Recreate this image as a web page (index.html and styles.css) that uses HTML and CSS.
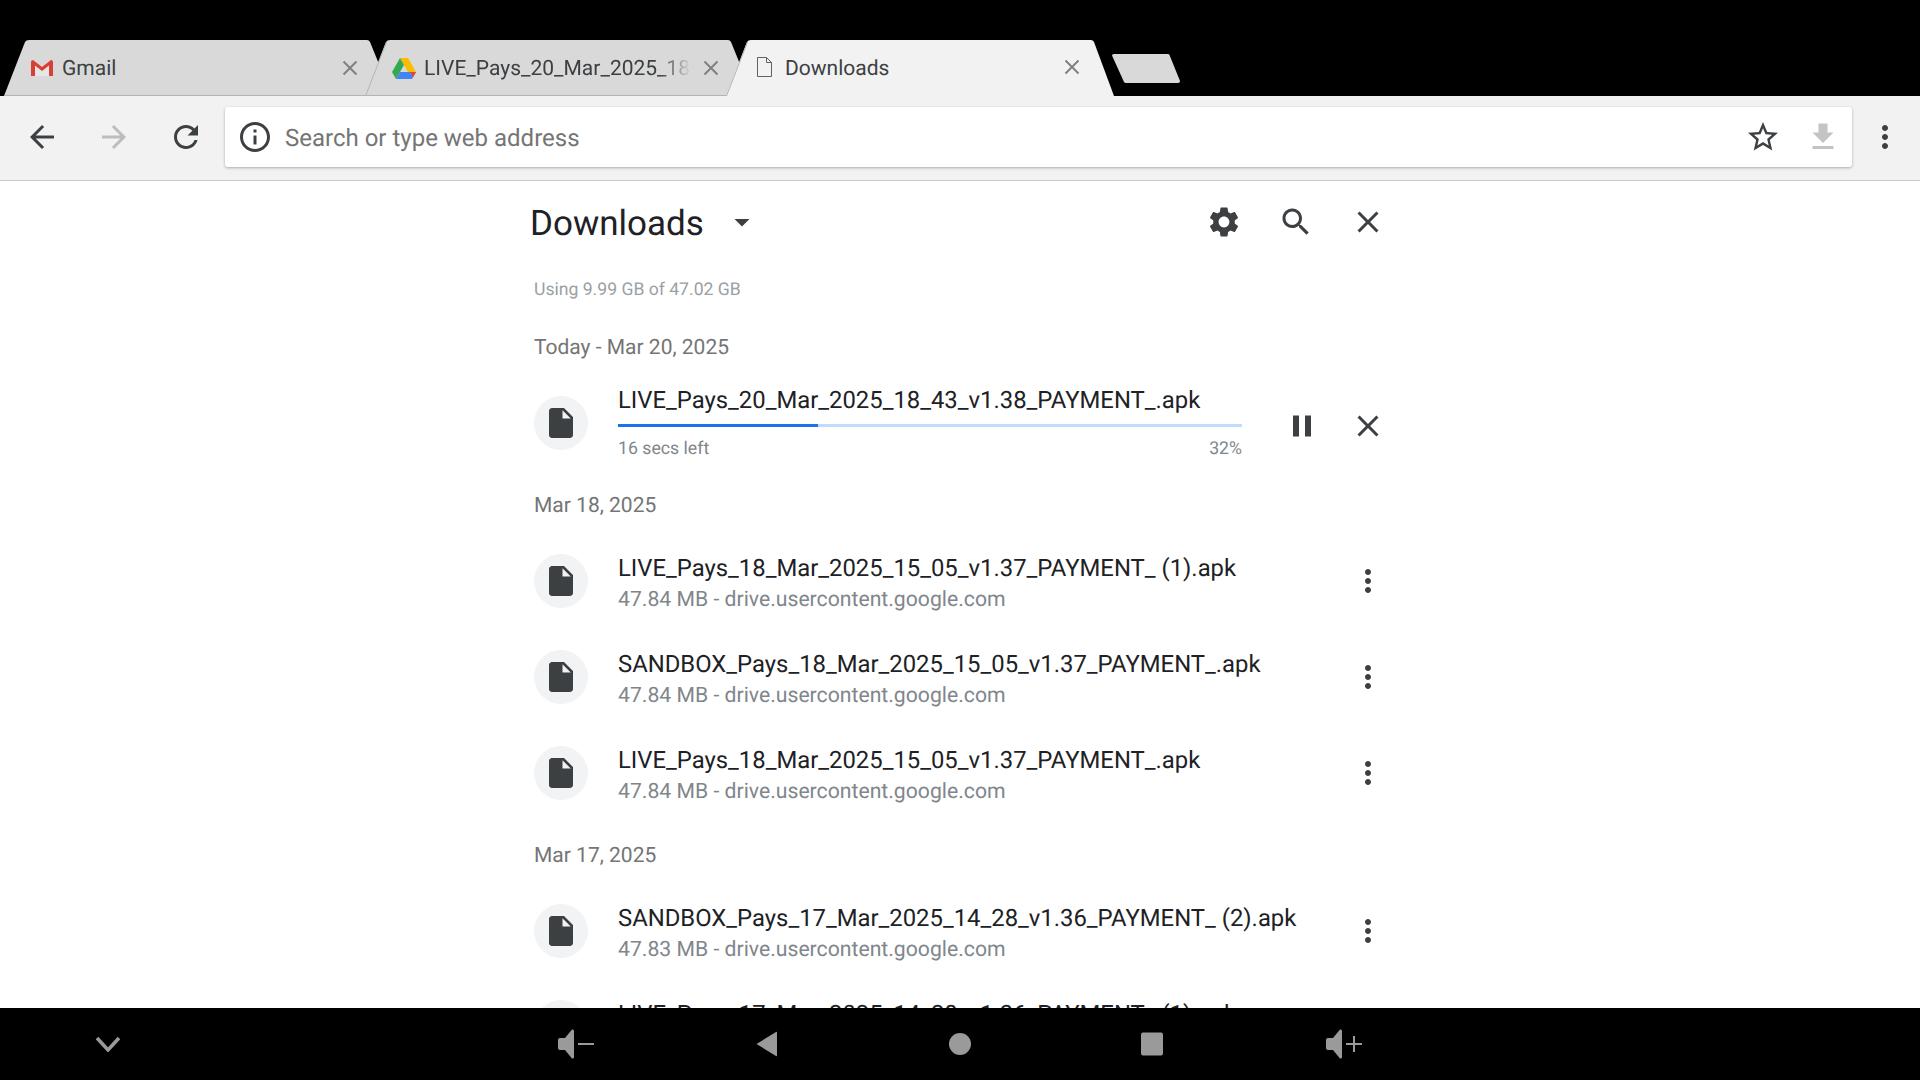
FILE: index.html
```html
<!DOCTYPE html>
<html lang="en">
<head>
  <meta charset="UTF-8" />
  <title>Downloads</title>
  <link rel="stylesheet" href="styles.css">
</head>
<body>

  <!-- Tab strip -->
  <div class="tabstrip">
    <div class="tab">
      <svg class="tab-shape" viewBox="0 0 388 56" preserveAspectRatio="none"><path class="shape-fill" d="M0 56L21 2Q22 0 25 0H363Q365 0 366 2L388 56Z"/><path class="shape-line" d="M0 55.500H388"/></svg>
      <svg class="favicon gmail" viewBox="0 0 22 16"><path fill="#e6e6e6" d="M2 1L11 8L20 1V16H2Z"/><path fill="#d93f32" d="M0 2Q0 0 2 0L11 7L20 0Q22 0 22 2V16H18V5.500L11 11L4 5.500V16H0Z"/></svg>
      <span class="tab-title">Gmail</span>
      <svg class="tab-close" viewBox="0 0 16 16"><path d="M1.500 1.500L14.500 14.500M14.500 1.500L1.500 14.500"/></svg>
    </div>
    <div class="tab">
      <svg class="tab-shape" viewBox="0 0 388 56" preserveAspectRatio="none"><path class="shape-fill" d="M0 56L21 2Q22 0 25 0H363Q365 0 366 2L388 56Z"/><path class="shape-line" d="M0 55.500H388M0.500 56L21.500 2"/></svg>
      <svg class="favicon drive" viewBox="0 0 24 21"><path fill="#fbbc04" d="M8 0H16L24 14H16Z"/><path fill="#34a853" d="M8 0L12 7L4 21L0 14Z"/><path fill="#4285f4" d="M8 14H24L20 21H4Z"/><path fill="#ea4335" d="M18.500 14H24L20.800 19.600Z"/></svg>
      <span class="tab-title tab-title-fade">LIVE_Pays_20_Mar_2025_18_43_v1.38_PAYMENT_.apk</span>
      <svg class="tab-close" viewBox="0 0 16 16"><path d="M1.500 1.500L14.500 14.500M14.500 1.500L1.500 14.500"/></svg>
    </div>
    <div class="tab tab-active">
      <svg class="tab-shape" viewBox="0 0 388 56" preserveAspectRatio="none"><path class="shape-fill" d="M0 56L21 2Q22 0 25 0H365Q367 0 368 2L388 56Z"/><path class="shape-line" d="M0.500 56L21.500 2"/></svg>
      <svg class="favicon page-icon" viewBox="0 0 15 20"><path d="M.5.500H9.500L14.500 5.500V19.500H.5ZM9.500.500V5.500H14.500"/></svg>
      <span class="tab-title">Downloads</span>
      <svg class="tab-close" viewBox="0 0 16 16"><path d="M1.500 1.500L14.500 14.500M14.500 1.500L1.500 14.500"/></svg>
    </div>
    <svg class="new-tab" viewBox="0 0 68 29"><path d="M0 1.500Q0 0 2 0H56Q57 0 57.500 1L68 27Q68 29 66 29H14Q12.500 29 12 28Z"/></svg>
  </div>

  <!-- Toolbar -->
  <div class="toolbar">
    <button class="tool-btn"><svg class="icon" viewBox="0 0 24 24"><path d="M20 11H7.830l5.590-5.590L12 4l-8 8 8 8 1.410-1.410L7.830 13H20v-2z"/></svg></button>
    <button class="tool-btn tool-off"><svg class="icon" viewBox="0 0 24 24"><path d="M12 4l-1.410 1.410L16.170 11H4v2h12.170l-5.580 5.590L12 20l8-8z"/></svg></button>
    <button class="tool-btn"><svg class="icon" viewBox="0 0 24 24"><path d="M17.650 6.350C16.200 4.900 14.210 4 12 4c-4.420 0-7.990 3.580-7.990 8s3.570 8 7.990 8c3.730 0 6.840-2.550 7.730-6h-2.080c-.82 2.330-3.040 4-5.650 4-3.310 0-6-2.690-6-6s2.690-6 6-6c1.660 0 3.140.69 4.220 1.780L13 11h7V4l-2.350 2.350z"/></svg></button>
    <div class="omnibox">
      <svg class="icon info" viewBox="0 0 24 24"><path d="M11 7h2v2h-2zm0 4h2v6h-2zm1-9C6.480 2 2 6.480 2 12s4.480 10 10 10 10-4.480 10-10S17.520 2 12 2zm0 18c-4.410 0-8-3.590-8-8s3.590-8 8-8 8 3.590 8 8-3.590 8-8 8z"/></svg>
      <span class="omni-text">Search or type web address</span>
      <svg class="icon star" viewBox="0 0 24 24"><path d="M22 9.240l-7.190-.62L12 2 9.190 8.630 2 9.240l5.460 4.730L5.820 21 12 17.270 18.180 21l-1.630-7.030L22 9.240zM12 15.400l-3.760 2.270 1-4.280-3.320-2.880 4.380-.38L12 6.100l1.710 4.040 4.380.38-3.320 2.880 1 4.280L12 15.400z"/></svg>
      <svg class="icon dl-arrow" viewBox="0 0 24 24"><path d="M19 9h-4V3H9v6H5l7 7 7-7zM5 18v2h14v-2H5z"/></svg>
    </div>
    <button class="tool-btn tool-menu"><svg class="icon" viewBox="0 0 24 24"><path d="M12 8c1.100 0 2-.9 2-2s-.9-2-2-2-2 .9-2 2 .9 2 2 2zm0 2c-1.100 0-2 .9-2 2s.9 2 2 2 2-.9 2-2-.9-2-2-2zm0 6c-1.100 0-2 .9-2 2s.9 2 2 2 2-.9 2-2-.9-2-2-2z"/></svg></button>
  </div>

  <!-- Downloads page -->
  <main class="content">
    <div class="column">
      <div class="page-head">
        <h1>Downloads</h1>
        <svg class="icon drop" viewBox="0 0 24 24"><path d="M7 10l5 5 5-5z"/></svg>
        <div class="head-actions">
          <svg class="icon" viewBox="0 0 24 24"><path d="M19.140 12.940c.04-.3.06-.61.06-.94 0-.32-.02-.64-.07-.94l2.030-1.580c.18-.14.23-.41.12-.61l-1.920-3.320c-.12-.22-.37-.29-.59-.22l-2.390.96c-.5-.38-1.030-.7-1.620-.94l-.36-2.540c-.04-.24-.24-.41-.48-.41h-3.840c-.24 0-.43.17-.47.41l-.36 2.540c-.59.24-1.130.57-1.620.94l-2.390-.96c-.22-.08-.47 0-.59.22L2.740 8.870c-.12.21-.08.47.12.61l2.030 1.580c-.05.3-.09.63-.09.94s.02.64.07.94l-2.030 1.580c-.18.14-.23.41-.12.61l1.920 3.320c.12.22.37.29.59.22l2.390-.96c.5.38 1.030.7 1.620.94l.36 2.540c.05.24.24.41.48.41h3.840c.24 0 .44-.17.47-.41l.36-2.540c.59-.24 1.130-.56 1.620-.94l2.390.96c.22.08.47 0 .59-.22l1.920-3.320c.12-.22.07-.47-.12-.61l-2.010-1.580zM12 15.600c-1.980 0-3.600-1.620-3.600-3.600s1.620-3.600 3.600-3.600 3.600 1.620 3.600 3.600-1.620 3.600-3.600 3.600z"/></svg>
          <svg class="icon" viewBox="0 0 24 24"><path d="M15.500 14h-.79l-.28-.27C15.410 12.590 16 11.110 16 9.500 16 5.910 13.090 3 9.500 3S3 5.910 3 9.500 5.910 16 9.500 16c1.610 0 3.090-.59 4.230-1.570l.27.28v.79l5 4.990L20.490 19l-4.990-5zm-6 0C7.010 14 5 11.990 5 9.500S7.010 5 9.500 5 14 7.010 14 9.500 11.990 14 9.500 14z"/></svg>
          <svg class="icon" viewBox="0 0 24 24"><path d="M19 6.410L17.590 5 12 10.590 6.410 5 5 6.410 10.590 12 5 17.590 6.410 19 12 13.410 17.590 19 19 17.590 13.410 12z"/></svg>
        </div>
      </div>

      <p class="storage">Using 9.99 GB of 47.02 GB</p>

      <h2 class="date">Today - Mar 20, 2025</h2>
      <div class="item">
        <div class="file-circle"><svg class="icon" viewBox="0 0 24 24"><path d="M6 2c-1.100 0-1.990.9-1.990 2L4 20c0 1.100.89 2 1.990 2H18c1.100 0 2-.9 2-2V8l-6-6H6zm7 7V3.500L18.500 9H13z"/></svg></div>
        <div class="item-body item-body-progress">
          <div class="name">LIVE_Pays_20_Mar_2025_18_43_v1.38_PAYMENT_.apk</div>
          <div class="bar"><div class="bar-fill" style="width: 32%"></div></div>
          <div class="bar-info"><span>16 secs left</span><span>32%</span></div>
        </div>
        <div class="item-actions item-actions-progress">
          <svg class="icon" viewBox="0 0 24 24"><path d="M6 19h4V5H6v14zm8-14v14h4V5h-4z"/></svg>
          <svg class="icon" viewBox="0 0 24 24"><path d="M19 6.410L17.590 5 12 10.590 6.410 5 5 6.410 10.590 12 5 17.590 6.410 19 12 13.410 17.590 19 19 17.590 13.410 12z"/></svg>
        </div>
      </div>

      <h2 class="date">Mar 18, 2025</h2>
      <div class="item">
        <div class="file-circle"><svg class="icon" viewBox="0 0 24 24"><path d="M6 2c-1.100 0-1.990.9-1.990 2L4 20c0 1.100.89 2 1.990 2H18c1.100 0 2-.9 2-2V8l-6-6H6zm7 7V3.500L18.500 9H13z"/></svg></div>
        <div class="item-body">
          <div class="name">LIVE_Pays_18_Mar_2025_15_05_v1.37_PAYMENT_ (1).apk</div>
          <div class="sub">47.84 MB - drive.usercontent.google.com</div>
        </div>
        <div class="item-actions"><svg class="icon" viewBox="0 0 24 24"><path d="M12 8c1.100 0 2-.9 2-2s-.9-2-2-2-2 .9-2 2 .9 2 2 2zm0 2c-1.100 0-2 .9-2 2s.9 2 2 2 2-.9 2-2-.9-2-2-2zm0 6c-1.100 0-2 .9-2 2s.9 2 2 2 2-.9 2-2-.9-2-2-2z"/></svg></div>
      </div>
      <div class="item">
        <div class="file-circle"><svg class="icon" viewBox="0 0 24 24"><path d="M6 2c-1.100 0-1.990.9-1.990 2L4 20c0 1.100.89 2 1.990 2H18c1.100 0 2-.9 2-2V8l-6-6H6zm7 7V3.500L18.500 9H13z"/></svg></div>
        <div class="item-body">
          <div class="name">SANDBOX_Pays_18_Mar_2025_15_05_v1.37_PAYMENT_.apk</div>
          <div class="sub">47.84 MB - drive.usercontent.google.com</div>
        </div>
        <div class="item-actions"><svg class="icon" viewBox="0 0 24 24"><path d="M12 8c1.100 0 2-.9 2-2s-.9-2-2-2-2 .9-2 2 .9 2 2 2zm0 2c-1.100 0-2 .9-2 2s.9 2 2 2 2-.9 2-2-.9-2-2-2zm0 6c-1.100 0-2 .9-2 2s.9 2 2 2 2-.9 2-2-.9-2-2-2z"/></svg></div>
      </div>
      <div class="item">
        <div class="file-circle"><svg class="icon" viewBox="0 0 24 24"><path d="M6 2c-1.100 0-1.990.9-1.990 2L4 20c0 1.100.89 2 1.990 2H18c1.100 0 2-.9 2-2V8l-6-6H6zm7 7V3.500L18.500 9H13z"/></svg></div>
        <div class="item-body">
          <div class="name">LIVE_Pays_18_Mar_2025_15_05_v1.37_PAYMENT_.apk</div>
          <div class="sub">47.84 MB - drive.usercontent.google.com</div>
        </div>
        <div class="item-actions"><svg class="icon" viewBox="0 0 24 24"><path d="M12 8c1.100 0 2-.9 2-2s-.9-2-2-2-2 .9-2 2 .9 2 2 2zm0 2c-1.100 0-2 .9-2 2s.9 2 2 2 2-.9 2-2-.9-2-2-2zm0 6c-1.100 0-2 .9-2 2s.9 2 2 2 2-.9 2-2-.9-2-2-2z"/></svg></div>
      </div>

      <h2 class="date">Mar 17, 2025</h2>
      <div class="item">
        <div class="file-circle"><svg class="icon" viewBox="0 0 24 24"><path d="M6 2c-1.100 0-1.990.9-1.990 2L4 20c0 1.100.89 2 1.990 2H18c1.100 0 2-.9 2-2V8l-6-6H6zm7 7V3.500L18.500 9H13z"/></svg></div>
        <div class="item-body">
          <div class="name">SANDBOX_Pays_17_Mar_2025_14_28_v1.36_PAYMENT_ (2).apk</div>
          <div class="sub">47.83 MB - drive.usercontent.google.com</div>
        </div>
        <div class="item-actions"><svg class="icon" viewBox="0 0 24 24"><path d="M12 8c1.100 0 2-.9 2-2s-.9-2-2-2-2 .9-2 2 .9 2 2 2zm0 2c-1.100 0-2 .9-2 2s.9 2 2 2 2-.9 2-2-.9-2-2-2zm0 6c-1.100 0-2 .9-2 2s.9 2 2 2 2-.9 2-2-.9-2-2-2z"/></svg></div>
      </div>
      <div class="item">
        <div class="file-circle"><svg class="icon" viewBox="0 0 24 24"><path d="M6 2c-1.100 0-1.990.9-1.990 2L4 20c0 1.100.89 2 1.990 2H18c1.100 0 2-.9 2-2V8l-6-6H6zm7 7V3.500L18.500 9H13z"/></svg></div>
        <div class="item-body">
          <div class="name">LIVE_Pays_17_Mar_2025_14_28_v1.36_PAYMENT_ (1).apk</div>
          <div class="sub">47.83 MB - drive.usercontent.google.com</div>
        </div>
      </div>
    </div>
  </main>

  <!-- Android nav bar -->
  <div class="navbar">
    <div class="nav-slot nav-hide"><svg viewBox="0 0 26 16"><path class="nav-stroke" d="M2 2L13 14L24 2"/></svg></div>
    <div class="nav-slot"><svg viewBox="0 0 36 30"><path d="M0 11Q0 9 2 9H7L14 0.500Q16 0 16 2V28Q16 30 14 29.500L7 21H2Q0 21 0 19Z"/><path class="nav-thin" d="M20 15H36"/></svg></div>
    <div class="nav-slot"><svg viewBox="0 0 36 30"><path d="M27 3.500Q27 2.500 26 3L6.500 15L26 27Q27 27.500 27 26.500Z"/></svg></div>
    <div class="nav-slot"><svg viewBox="0 0 36 30"><circle cx="18" cy="15" r="11"/></svg></div>
    <div class="nav-slot"><svg viewBox="0 0 36 30"><rect x="7" y="3.500" width="22" height="23" rx="2"/></svg></div>
    <div class="nav-slot"><svg viewBox="0 0 36 30"><path d="M0 11Q0 9 2 9H7L14 0.500Q16 0 16 2V28Q16 30 14 29.500L7 21H2Q0 21 0 19Z"/><path class="nav-thin" d="M20 15H36M28 7V23"/></svg></div>
  </div>

</body>
</html>
```

FILE: styles.css
```css
* {
  box-sizing: border-box;
}

html, body {
  height: 100%;
}

body {
  margin: 0;
  background: #000;
  font-family: Roboto, "Noto Sans", sans-serif;
  text-rendering: geometricPrecision;
  display: flex;
  flex-direction: column;
  overflow: hidden;
}

.icon {
  width: 36px;
  height: 36px;
  fill: #3c4043;
  flex: none;
  display: block;
}

/* Tab strip */
.tabstrip {
  height: 96px;
  padding: 40px 0 0 4px;
  display: flex;
  flex: none;
}

.tab {
  position: relative;
  width: 388px;
  height: 56px;
  margin-right: -27px;
  display: flex;
  align-items: center;
  padding: 0 34px 0 27px;
  color: #3c4043;
}

.tab-shape {
  position: absolute;
  left: 0;
  top: 0;
  width: 100%;
  height: 100%;
}

.shape-fill {
  fill: #d9d9d9;
}

.shape-line {
  fill: none;
  stroke: #b4b4b4;
  stroke-width: 1;
}

.tab-active .shape-fill {
  fill: #f2f2f2;
}

.favicon, .tab-title, .tab-close {
  position: relative;
}

.favicon {
  flex: none;
  margin-right: 9px;
}

.gmail {
  width: 22px;
  height: 16px;
}

.drive {
  width: 24px;
  height: 21px;
  margin-right: 8px;
}

.page-icon {
  width: 15px;
  height: 20px;
  margin: 0 13px 2px 4px;
  fill: none;
  stroke: #5f6368;
  stroke-width: 1;
}

.tab-title {
  font-size: 21px;
  line-height: 30px;
  padding-top: 2px;
  flex: 1;
  white-space: nowrap;
  overflow: hidden;
  color: #3c4043;
}

.tab-title-fade {
  -webkit-mask-image: linear-gradient(to right, #000 88%, transparent 100%);
  mask-image: linear-gradient(to right, #000 88%, transparent 100%);
  margin-right: 12px;
}

.tab-close {
  width: 16px;
  height: 16px;
  flex: none;
  fill: none;
  stroke: #808080;
  stroke-width: 2;
}

.tab-active .tab-close {
  margin-bottom: 2px;
}

.new-tab {
  width: 68px;
  height: 29px;
  margin: 14px 0 0 25px;
  fill: #d9d9d9;
}

/* Toolbar */
.toolbar {
  height: 85px;
  flex: none;
  background: #f2f2f2;
  border-bottom: 1px solid #c8c8c8;
  display: flex;
  align-items: center;
  padding: 0 0 2px 18px;
}

.tool-btn {
  width: 48px;
  height: 48px;
  margin-right: 24px;
  padding: 6px;
  border: none;
  background: none;
}

.tool-off .icon {
  fill: #bdbdbd;
}

.tool-menu {
  margin: 0 0 0 9px;
}

.omnibox {
  width: 1627px;
  height: 60px;
  margin-left: -9px;
  background: #fff;
  border-radius: 3px;
  box-shadow: 0 1px 3px rgba(0,0,0,0.3);
  display: flex;
  align-items: center;
  padding: 0 11px 0 12px;
}

.omni-text {
  flex: 1;
  font-size: 24px;
  color: #757575;
  margin: 2px 0 0 12px;
}

.star {
  margin-right: 24px;
}

.dl-arrow {
  fill: #c4c4c4;
}

/* Downloads page */
.content {
  flex: 1;
  min-height: 0;
  overflow: hidden;
  background: #fff;
}

.column {
  width: 852px;
  margin: 0 auto;
}

.page-head {
  height: 81px;
  display: flex;
  align-items: center;
}

h1 {
  margin: 3px 0 0 -4px;
  font-size: 35px;
  font-weight: 400;
  color: #202124;
}

.drop {
  margin-left: 20px;
}

.head-actions {
  margin-left: auto;
  display: flex;
  gap: 36px;
}

.storage {
  margin: 0;
  height: 57px;
  line-height: 56px;
  font-size: 17.600px;
  color: #9aa0a6;
}

.date {
  margin: 6px 0 0;
  height: 56px;
  line-height: 58px;
  font-size: 21px;
  font-weight: 400;
  color: #757575;
}

.storage + .date {
  margin-top: 0;
}

.item {
  height: 96px;
  display: flex;
  align-items: center;
}

.file-circle {
  width: 54px;
  height: 54px;
  border-radius: 50%;
  background: #f1f3f4;
  display: flex;
  align-items: center;
  justify-content: center;
  flex: none;
  margin-right: 30px;
}

.item-body {
  flex: 1;
  min-width: 0;
  margin-top: 4px;
}

.item-body-progress {
  margin: 0 0 1px;
}

.name {
  font-size: 23.850px;
  line-height: 32px;
  color: #202124;
  white-space: nowrap;
}

.sub {
  font-size: 21.200px;
  line-height: 30px;
  padding-top: 1px;
  color: #80868b;
  white-space: nowrap;
}

.bar {
  height: 3px;
  margin-top: 8px;
  width: 624px;
  background: #c2dbfb;
}

.bar-fill {
  height: 100%;
  background: #1a73e8;
}

.bar-info {
  width: 624px;
  display: flex;
  justify-content: space-between;
  font-size: 17.700px;
  line-height: 24px;
  margin-top: 10px;
  color: #80868b;
}

.item-actions {
  display: flex;
  gap: 30px;
  flex: none;
}

.item-actions-progress {
  margin-top: 6px;
}

/* Android nav bar */
.navbar {
  height: 72px;
  flex: none;
  background: #000;
  display: flex;
  align-items: center;
}

.nav-slot {
  width: 192px;
  display: flex;
  justify-content: center;
}

.nav-hide {
  width: 216px;
  margin-right: 264px;
}

.nav-slot svg {
  width: 36px;
  height: 30px;
  fill: #9a9a9a;
}

.nav-hide svg {
  width: 26px;
  height: 16px;
}

.nav-stroke {
  fill: none;
  stroke: #9a9a9a;
  stroke-width: 3.500;
}

.nav-thin {
  fill: none;
  stroke: #9a9a9a;
  stroke-width: 2;
}
```
